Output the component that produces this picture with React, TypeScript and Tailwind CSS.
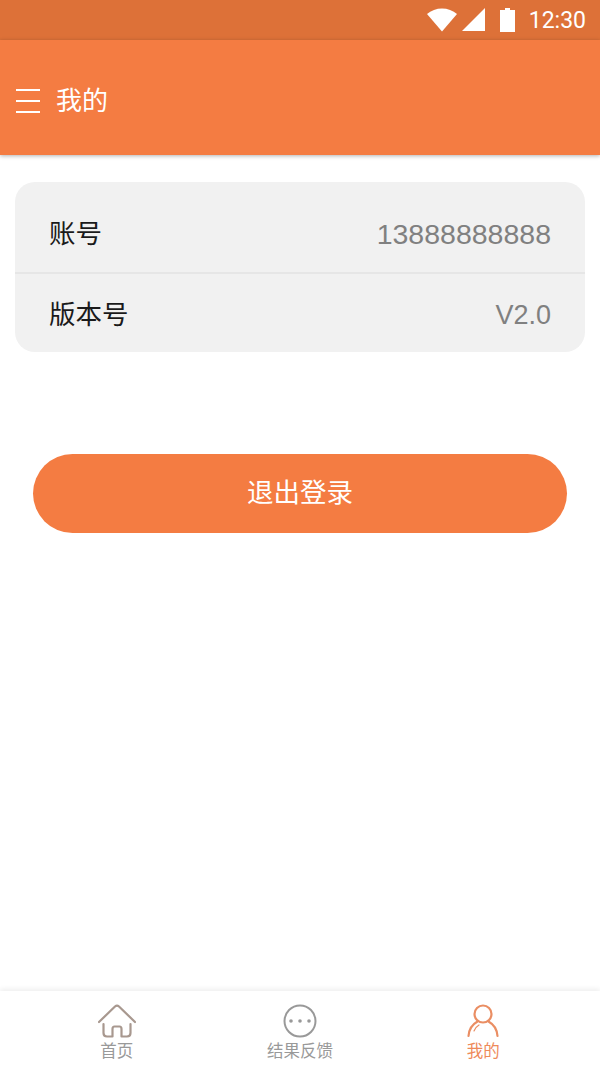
import type { ReactNode } from 'react';

const font = { fontFamily: '"Roboto","Noto Sans CJK SC",sans-serif' };
const numFont = { fontFamily: '"Liberation Sans",sans-serif' };

function StatusBar() {
  return (
    <div className="h-10 bg-[#dd7138] flex items-center justify-end pr-[14px]">
      <svg width="30" height="24" viewBox="0 0 30 24">
        <path d="M0 6 C8 -1.5 22 -1.5 30 6 L15 23.5 Z" fill="#fff" />
      </svg>
      <svg width="23" height="24" viewBox="0 0 23 24" className="ml-[5px]">
        <path d="M0 23 L23 0 V23 Z" fill="#fff" />
      </svg>
      <svg width="15" height="24" viewBox="0 0 15 24" className="ml-[15px]">
        <path d="M5 0 H10 V2 H15 V24 H0 V2 H5 Z" fill="#fff" />
      </svg>
      <span className="ml-[14px] text-white text-[23px] leading-none">12:30</span>
    </div>
  );
}

function Header() {
  return (
    <div className="h-[115px] bg-[#f47c42] flex items-center pl-[16px] pt-[7px] shadow-[0_1px_4px_rgba(0,0,0,0.3)] relative">
      <div className="flex flex-col gap-[9px] w-[24px]">
        <div className="h-[2px] bg-white" />
        <div className="h-[2px] bg-white" />
        <div className="h-[2px] bg-white" />
      </div>
      <span className="ml-[16px] text-white text-[26px]">我的</span>
    </div>
  );
}

function TabItem({ label, active, icon }: { label: string; active?: boolean; icon: ReactNode }) {
  return (
    <div className="flex-1 flex flex-col items-center pt-[13px]">
      {icon}
      <span className={`text-[16.5px] leading-[20px] mt-[4px] ${active ? 'text-[#ee8a5a]' : 'text-[#999]'}`}>{label}</span>
    </div>
  );
}

export default function App() {
  return (
    <div className="w-[600px] h-[1067px] bg-white flex flex-col overflow-hidden" style={font}>
      <StatusBar />
      <Header />
      <div className="flex-1 px-[15px] pt-[27px]">
        <div className="rounded-[20px] bg-[#f1f1f1] h-[170px] flex flex-col">
          <div className="h-[92px] flex items-center justify-between px-[34px] pt-[14px] border-b-2 border-[#e6e6e6]">
            <span className="text-[26.5px] text-[#1a1a1a]">账号</span>
            <span className="text-[28.5px] text-[#808080]" style={numFont}>13888888888</span>
          </div>
          <div className="flex-1 flex items-center justify-between px-[34px] pt-[4px]">
            <span className="text-[26.5px] text-[#1a1a1a]">版本号</span>
            <span className="text-[27px] text-[#808080]" style={numFont}>V2.0</span>
          </div>
        </div>
        <div className="mt-[102px] mx-[18px] h-[79px] rounded-full bg-[#f47c42] flex items-center justify-center pb-[1px] text-white text-[26.5px]">
          退出登录
        </div>
      </div>
      <div className="h-[76px] bg-white shadow-[0_-2px_5px_rgba(0,0,0,0.07)] relative flex px-[25px]">
        <TabItem
          label="首页"
          icon={
            <svg width="38" height="34" viewBox="0 0 38 34" fill="none" stroke="#a8988f" strokeWidth="2.2" strokeLinecap="round" strokeLinejoin="round">
              <path d="M1 18 L17 2.5 Q19 0.8 21 2.5 L37 18" />
              <path d="M5.5 20 V29 Q5.5 32.5 9 32.5 H14.5 V25 Q14.5 22.5 16.5 22.5 H21.5 Q23.5 22.5 23.5 25 V32.5 H29 Q32.5 32.5 32.5 29 V20" />
            </svg>
          }
        />
        <TabItem
          label="结果反馈"
          icon={
            <svg width="34" height="34" viewBox="0 0 34 34" fill="none" stroke="#999" strokeWidth="2">
              <circle cx="17" cy="17" r="15.5" />
              <circle cx="8" cy="17" r="1.8" fill="#999" stroke="none" />
              <circle cx="17" cy="17" r="1.8" fill="#999" stroke="none" />
              <circle cx="26" cy="17" r="1.8" fill="#999" stroke="none" />
            </svg>
          }
        />
        <TabItem
          label="我的"
          active
          icon={
            <svg width="32" height="34" viewBox="0 0 32 34" fill="none" stroke="#ea8e63" strokeWidth="2.2" strokeLinecap="round">
              <circle cx="16" cy="10" r="8.5" />
              <path d="M1.5 32 C2 25 6 20 10.5 17.5" />
              <path d="M30.5 32 C30 25 26 20 21.5 17.5" />
              <path d="M7 27 C8 24 9.5 22.5 12 21" strokeWidth="1.2" />
            </svg>
          }
        />
      </div>
    </div>
  );
}
